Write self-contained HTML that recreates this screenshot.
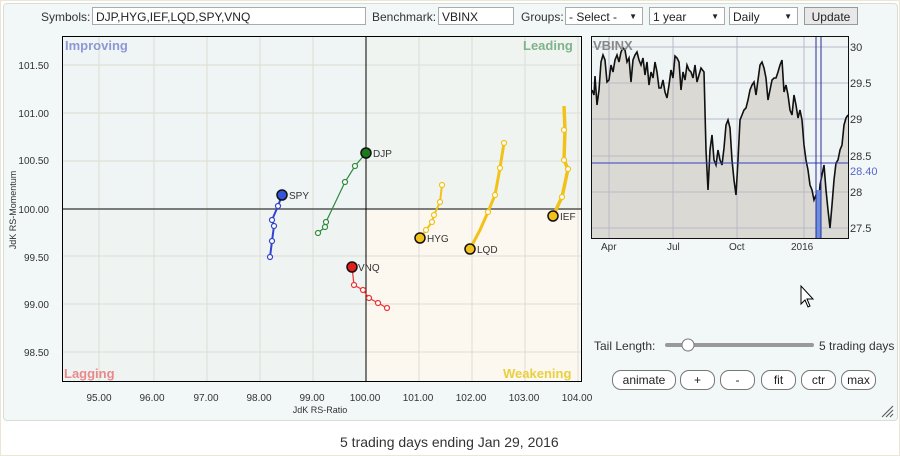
<!DOCTYPE html><html><head><meta charset="utf-8"><style>
body{margin:0;width:900px;height:456px;background:#fff;font-family:"Liberation Sans",sans-serif;overflow:hidden;position:relative}
.frame{position:absolute;left:0;top:0;width:898px;height:454px;border:1px solid #ece6d4}
.panel{position:absolute;left:3px;top:3px;width:893px;height:416px;background:#f2f7f7;border:1px solid #d8ddd8;border-radius:4px}
.t{position:absolute;font-size:12px;color:#333;white-space:nowrap}
.inp{position:absolute;height:18px;border:1px solid #aaa;background:#fff;font-size:12px;line-height:18px;padding-left:3px;box-sizing:border-box;color:#222}
.btn{position:absolute;height:20px;border:1px solid #777;border-radius:9px;background:#fff;font-size:12px;text-align:center;line-height:19px;box-sizing:border-box;color:#222}
</style></head><body>
<div class="frame"></div>
<div class="panel"></div>
<div class="t" style="left:41px;top:10px">Symbols:</div>
<div class="inp" style="left:92px;top:7px;width:274px">DJP,HYG,IEF,LQD,SPY,VNQ</div>
<div class="t" style="left:372px;top:10px">Benchmark:</div>
<div class="inp" style="left:438px;top:7px;width:76px">VBINX</div>
<div class="t" style="left:521px;top:10px">Groups:</div>
<div class="inp" style="left:565px;top:7px;width:78px">- Select -<span style="position:absolute;right:5px;font-size:8px">▼</span></div>
<div class="inp" style="left:649px;top:7px;width:76px">1 year<span style="position:absolute;right:5px;font-size:8px">▼</span></div>
<div class="inp" style="left:729px;top:7px;width:69px">Daily<span style="position:absolute;right:5px;font-size:8px">▼</span></div>
<div class="inp" style="left:804px;top:7px;width:54px;background:#e8e8e8;text-align:center;padding:0;border-color:#999">Update</div>

<svg width="900" height="456" style="position:absolute;left:0;top:0" font-family="Liberation Sans, sans-serif">
<rect x="62" y="36" width="304" height="173" fill="#eff4f4"/>
<rect x="366" y="36" width="216" height="173" fill="#eff4f1"/>
<rect x="62" y="209" width="304" height="173" fill="#eff3f2"/>
<rect x="366" y="209" width="216" height="173" fill="#fcf8ef"/>
<g stroke="#ddddd5" stroke-width="1">
<path d="M99 36V382M154 36V382M207 36V382M260 36V382M313 36V382M419 36V382M472 36V382M525 36V382M578 36V382"/>
<path d="M62 65H582M62 113H582M62 161H582M62 256H582M62 304H582M62 352H582"/>
</g>
<line x1="62" y1="209" x2="582" y2="209" stroke="#555" stroke-width="1.5"/>
<line x1="366" y1="36" x2="366" y2="382" stroke="#000"/>
<rect x="62.5" y="36.5" width="519" height="345" fill="none" stroke="#000"/>
<g font-size="13" font-weight="bold"><text x="65" y="50" fill="#8f97d6">Improving</text><text x="523" y="50" fill="#7fb38c">Leading</text><text x="64" y="378" fill="#e88a8a">Lagging</text><text x="503" y="378" fill="#e8d040">Weakening</text></g>
<g font-size="10" fill="#333" text-anchor="end"><text x="49" y="69">101.50</text><text x="49" y="117">101.00</text><text x="49" y="164">100.50</text><text x="49" y="213">100.00</text><text x="49" y="261">99.50</text><text x="49" y="308">99.00</text><text x="49" y="356">98.50</text></g>
<g font-size="10" fill="#333" text-anchor="middle"><text x="99" y="401">95.00</text><text x="152" y="401">96.00</text><text x="206" y="401">97.00</text><text x="259" y="401">98.00</text><text x="312" y="401">99.00</text><text x="365" y="401">100.00</text><text x="418" y="401">101.00</text><text x="471" y="401">102.00</text><text x="524" y="401">103.00</text><text x="577" y="401">104.00</text><text x="320" y="413" font-size="9">JdK RS-Ratio</text></g>
<text x="16" y="210" font-size="9" fill="#333" transform="rotate(-90 16 210)" text-anchor="middle">JdK RS-Momentum</text>
<g fill="#fff" stroke-width="1.2">
<polyline points="318,233 325,227 326,222 345,182 355,166 366,153" fill="none" stroke="#2e8b3e"/>
<g stroke="#2e8b3e"><circle cx="318" cy="233" r="2.5"/><circle cx="325" cy="227" r="2.5"/><circle cx="326" cy="222" r="2.5"/><circle cx="345" cy="182" r="2.5"/><circle cx="355" cy="166" r="2.5"/></g>
<polyline points="270,257 272,241 274,226 272,220 278,206 282,195" fill="none" stroke="#3344cc" stroke-width="2"/>
<g stroke="#3344cc"><circle cx="270" cy="257" r="2.5"/><circle cx="272" cy="241" r="2.5"/><circle cx="274" cy="226" r="2.5"/><circle cx="272" cy="220" r="2.5"/><circle cx="278" cy="206" r="2.5"/></g>
<polyline points="387,308 378,303 369,298 363,290 354,285 352,267" fill="none" stroke="#e33"/>
<g stroke="#e33"><circle cx="387" cy="308" r="2.5"/><circle cx="378" cy="303" r="2.5"/><circle cx="369" cy="298" r="2.5"/><circle cx="363" cy="290" r="2.5"/><circle cx="354" cy="285" r="2.5"/></g>
<polyline points="442,185 440,202 434,215 432,222 426,230 420,238" fill="none" stroke="#f2c21a" stroke-width="2"/>
<g stroke="#f2c21a"><circle cx="442" cy="185" r="2.5"/><circle cx="440" cy="202" r="2.5"/><circle cx="434" cy="215" r="2.5"/><circle cx="432" cy="222" r="2.5"/><circle cx="426" cy="230" r="2.5"/></g>
<polyline points="504,143 500,168 495,195 488,212 480,230 470,249" fill="none" stroke="#f2c21a" stroke-width="3"/>
<g stroke="#f2c21a"><circle cx="504" cy="143" r="2.5"/><circle cx="500" cy="168" r="2.5"/><circle cx="495" cy="195" r="2.5"/><circle cx="488" cy="212" r="2.5"/></g>
<polyline points="564,106 565,130 564,160 568,169 562,197 553,216" fill="none" stroke="#f2c21a" stroke-width="3.5"/>
<g stroke="#f2c21a"><circle cx="564" cy="130" r="2.5"/><circle cx="564" cy="160" r="2.5"/><circle cx="568" cy="169" r="2.5"/><circle cx="562" cy="197" r="2.5"/></g>
</g>
<g stroke="#111" stroke-width="1.5"><circle cx="366" cy="153" r="5" fill="#1a7a1a"/><circle cx="282" cy="195" r="5" fill="#3355dd"/><circle cx="352" cy="267" r="5" fill="#e51c1c"/><circle cx="420" cy="238" r="5" fill="#f2c21a"/><circle cx="470" cy="249" r="5" fill="#f2c21a"/><circle cx="553" cy="216" r="5" fill="#f2c21a"/></g>
<g font-size="10" fill="#333"><text x="373" y="157">DJP</text><text x="289" y="199">SPY</text><text x="358" y="271">VNQ</text><text x="427" y="242">HYG</text><text x="477" y="253">LQD</text><text x="560" y="220">IEF</text></g>

<rect x="591" y="36" width="258" height="203" fill="#eff5f5"/>
<path d="M592,90 594,95 595,76 597,105 599,90 601,62 603,55 605,60 607,82 609,80 611,65 613,72 615,60 617,55 619,62 621,52 623,48 625,50 627,62 629,58 631,82 633,60 635,55 637,52 639,60 641,65 643,58 645,75 647,62 649,85 651,72 653,78 655,62 657,72 659,88 661,88 663,80 665,92 667,98 669,85 671,70 673,78 675,56 677,58 679,62 681,90 683,72 685,80 687,65 689,70 691,72 693,78 695,65 697,82 699,75 701,68 704,72 706,150 708,190 710,150 712,135 714,160 716,165 718,150 720,160 722,165 724,148 726,125 728,120 730,128 732,160 734,180 736,195 738,160 740,120 742,115 744,110 746,108 748,100 750,90 752,85 754,82 756,95 758,80 760,65 762,62 764,68 766,78 768,100 770,90 772,80 774,78 776,78 778,72 780,65 782,60 784,92 786,85 788,95 790,110 792,115 794,95 796,105 798,118 800,110 802,120 804,145 806,160 808,170 810,185 812,190 814,200 816,195 818,210 820,185 822,175 824,165 826,190 828,210 830,228 832,205 834,180 836,163 838,160 840,150 842,145 844,125 846,118 848,115 848,239 592,239Z" fill="#dad9d3"/>
<g stroke="#b9b9c9" stroke-width="1"><path d="M609 36V239M673 36V239M737 36V239M804 36V239M591 47H849M591 83H849M591 119H849M591 156H849M591 192H849M591 228H849"/></g>
<polyline points="592,90 594,95 595,76 597,105 599,90 601,62 603,55 605,60 607,82 609,80 611,65 613,72 615,60 617,55 619,62 621,52 623,48 625,50 627,62 629,58 631,82 633,60 635,55 637,52 639,60 641,65 643,58 645,75 647,62 649,85 651,72 653,78 655,62 657,72 659,88 661,88 663,80 665,92 667,98 669,85 671,70 673,78 675,56 677,58 679,62 681,90 683,72 685,80 687,65 689,70 691,72 693,78 695,65 697,82 699,75 701,68 704,72 706,150 708,190 710,150 712,135 714,160 716,165 718,150 720,160 722,165 724,148 726,125 728,120 730,128 732,160 734,180 736,195 738,160 740,120 742,115 744,110 746,108 748,100 750,90 752,85 754,82 756,95 758,80 760,65 762,62 764,68 766,78 768,100 770,90 772,80 774,78 776,78 778,72 780,65 782,60 784,92 786,85 788,95 790,110 792,115 794,95 796,105 798,118 800,110 802,120 804,145 806,160 808,170 810,185 812,190 814,200 816,195 818,210 820,185 822,175 824,165 826,190 828,210 830,228 832,205 834,180 836,163 838,160 840,150 842,145 844,125 846,118 848,115" fill="none" stroke="#111" stroke-width="1.6"/>
<rect x="816" y="190" width="5" height="48" fill="#6a8fe0"/>
<line x1="591" y1="163" x2="849" y2="163" stroke="#3344bb"/>
<line x1="816" y1="36" x2="816" y2="239" stroke="#2a2a99"/>
<line x1="821" y1="36" x2="821" y2="239" stroke="#2a2a99"/>
<rect x="591.5" y="36.5" width="257" height="202" fill="none" stroke="#111"/>
<text x="593" y="50" font-size="13" font-weight="bold" fill="#888">VBINX</text>
<g font-size="11" fill="#333"><text x="850" y="51">30</text><text x="850" y="87">29.5</text><text x="850" y="123">29</text><text x="850" y="160">28.5</text><text x="850" y="175" fill="#5566cc">28.40</text><text x="850" y="196">28</text><text x="850" y="232">27.5</text></g>
<g font-size="10" fill="#333"><text x="601" y="250">Apr</text><text x="667" y="250">Jul</text><text x="729" y="250">Oct</text><text x="791" y="250">2016</text></g>
<line x1="667" y1="345" x2="812" y2="345" stroke="#999" stroke-width="4" stroke-linecap="round"/>
<circle cx="688" cy="345" r="6" fill="#fff" stroke="#777"/>
<path d="M801 286 L801 304 L805 300 L808 307 L810 306 L807 299 L813 299 Z" fill="#fff" stroke="#000"/>
<path d="M882 417 L893 406 M886 417 L893 410 M890 417 L893 414" stroke="#555"/>
</svg>
<div class="t" style="left:594px;top:339px">Tail Length:</div>
<div class="t" style="left:819px;top:339px">5 trading days</div>
<div class="btn" style="left:612px;top:370px;width:64px">animate</div>
<div class="btn" style="left:680px;top:370px;width:35px">+</div>
<div class="btn" style="left:720px;top:370px;width:35px">-</div>
<div class="btn" style="left:761px;top:370px;width:35px">fit</div>
<div class="btn" style="left:801px;top:370px;width:35px">ctr</div>
<div class="btn" style="left:841px;top:370px;width:35px">max</div>
<div class="t" style="left:340px;top:434px;font-size:14px">5 trading days ending Jan 29, 2016</div>
</body></html>
